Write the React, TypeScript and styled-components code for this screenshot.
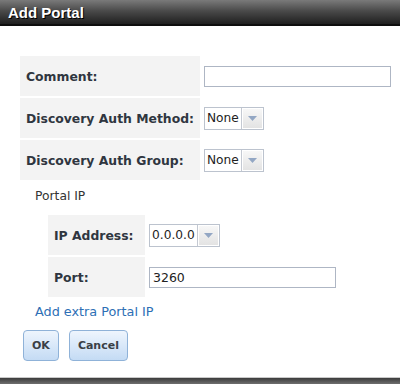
import styled, { createGlobalStyle } from "styled-components";

const GlobalStyle = createGlobalStyle`
  html, body {
    margin: 0;
    padding: 0;
    background: #ffffff;
  }
  body {
    font-family: "DejaVu Sans", Verdana, sans-serif;
  }
`;

const Dialog = styled.div`
  width: 400px;
  height: 384px;
  display: flex;
  flex-direction: column;
  background: #ffffff;
  overflow: hidden;
`;

const TitleBar = styled.div`
  height: 24px;
  flex-shrink: 0;
  display: flex;
  align-items: center;
  padding-left: 8px;
  background: linear-gradient(#7a7a7a 0%, #4a4a4a 45%, #1f1f1f 100%);
  border-bottom: 2px solid #0e0e0e;
`;

const Title = styled.h1`
  margin: 0;
  font-family: "Liberation Sans", Arial, sans-serif;
  font-size: 15px;
  font-weight: bold;
  color: #ffffff;
  text-shadow: 1px 1px 0 #000000;
`;

const Content = styled.div`
  padding: 30px 0 0 20px;
  display: flex;
  flex-direction: column;
`;

const FormGrid = styled.div<{ $labelWidth: number }>`
  display: grid;
  grid-template-columns: ${(p) => p.$labelWidth}px auto;
  grid-auto-rows: 40px;
  row-gap: 2px;
  column-gap: 2px;
`;

const LabelCell = styled.div`
  display: flex;
  align-items: center;
  padding-left: 6px;
  background: #f3f3f3;
  font-size: 12.4px;
  font-weight: bold;
  color: #2f3640;
  white-space: nowrap;
`;

const FieldCell = styled.div`
  display: flex;
  align-items: center;
  padding-left: 2px;
`;

const TextInput = styled.div<{ $width: number }>`
  box-sizing: border-box;
  width: ${(p) => p.$width}px;
  height: 21px;
  border: 1px solid #aeb6c4;
  background: #ffffff;
  display: flex;
  align-items: center;
  padding-left: 3px;
  font-size: 12.5px;
  color: #222222;
`;

const Select = styled.div`
  box-sizing: border-box;
  height: 23px;
  display: flex;
  border: 1px solid #bcc3ce;
  background: #ffffff;
`;

const SelectValue = styled.span`
  display: flex;
  align-items: center;
  padding: 0 2px;
  font-size: 12.2px;
  color: #222222;
  border-right: 1px solid #c4c9d2;
`;

const SelectArrow = styled.span`
  width: 21px;
  display: flex;
  align-items: center;
  justify-content: center;
  background: linear-gradient(#f7f7f7, #e3e3e3);
  border: 1px solid #ffffff;
  box-sizing: border-box;
`;

const SectionLabel = styled.div`
  margin: 8px 0 0 15px;
  font-size: 12.3px;
  line-height: 16px;
  color: #333333;
`;

const Nested = styled.div`
  margin: 11px 0 0 28px;
`;

const Link = styled.a`
  margin: 7px 0 0 15px;
  font-size: 12.8px;
  line-height: 16px;
  color: #2d6fb5;
  text-decoration: none;
  cursor: pointer;
`;

const ButtonRow = styled.div`
  display: flex;
  gap: 10px;
  margin: 10px 0 0 3px;
`;

const Button = styled.button`
  height: 31px;
  padding: 0 8px;
  border: 1px solid #8fb2d8;
  border-radius: 4px;
  background: linear-gradient(#eef5fd 0%, #d9e8f9 50%, #c4dbf4 100%);
  font-family: "DejaVu Sans", Verdana, sans-serif;
  font-size: 11px;
  font-weight: bold;
  color: #3a3f46;
  cursor: pointer;
`;

const Footer = styled.div`
  margin-top: auto;
  height: 6px;
  border-top: 1px solid #c9c9c9;
  background: linear-gradient(#3c3c3c, #6e6e6e);
`;

const Arrow = () => (
  <svg width="9" height="5" viewBox="0 0 9 5">
    <polygon points="0,0 9,0 4.5,5" fill="#93a7c4" />
  </svg>
);

const Dropdown = ({ value }: { value: string }) => (
  <Select>
    <SelectValue>{value}</SelectValue>
    <SelectArrow>
      <Arrow />
    </SelectArrow>
  </Select>
);

export default function App() {
  return (
    <>
      <GlobalStyle />
      <Dialog>
        <TitleBar>
          <Title>Add Portal</Title>
        </TitleBar>
        <Content>
          <FormGrid $labelWidth={180}>
            <LabelCell>Comment:</LabelCell>
            <FieldCell>
              <TextInput $width={187} />
            </FieldCell>
            <LabelCell>Discovery Auth Method:</LabelCell>
            <FieldCell>
              <Dropdown value="None" />
            </FieldCell>
            <LabelCell>Discovery Auth Group:</LabelCell>
            <FieldCell>
              <Dropdown value="None" />
            </FieldCell>
          </FormGrid>
          <SectionLabel>Portal IP</SectionLabel>
          <Nested>
            <FormGrid $labelWidth={97}>
              <LabelCell>IP Address:</LabelCell>
              <FieldCell>
                <Dropdown value="0.0.0.0" />
              </FieldCell>
              <LabelCell>Port:</LabelCell>
              <FieldCell>
                <TextInput $width={187}>3260</TextInput>
              </FieldCell>
            </FormGrid>
          </Nested>
          <Link>Add extra Portal IP</Link>
          <ButtonRow>
            <Button>OK</Button>
            <Button>Cancel</Button>
          </ButtonRow>
        </Content>
        <Footer />
      </Dialog>
    </>
  );
}
